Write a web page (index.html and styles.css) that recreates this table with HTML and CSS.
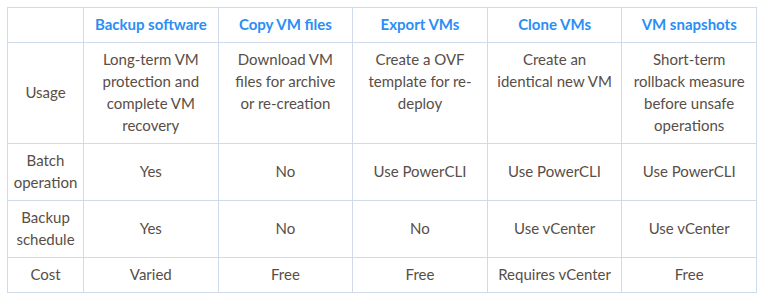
FILE: index.html
```html
<!DOCTYPE html>
<html lang="en">
<head>
    <meta charset="UTF-8">
    <title>VM backup methods</title>
    <link rel="stylesheet" href="styles.css">
</head>
<body>
    <table class="compare">
        <colgroup>
            <col class="col-label">
            <col><col><col><col><col>
        </colgroup>
        <thead>
            <tr>
                <th></th>
                <th>Backup software</th>
                <th>Copy VM files</th>
                <th>Export VMs</th>
                <th>Clone VMs</th>
                <th>VM snapshots</th>
            </tr>
        </thead>
        <tbody>
            <tr class="row-usage">
                <td>Usage</td>
                <td>Long-term VM protection and complete VM recovery</td>
                <td>Download VM files for archive or re-creation</td>
                <td>Create a OVF template for re-deploy</td>
                <td>Create an identical new VM</td>
                <td>Short-term rollback measure before unsafe operations</td>
            </tr>
            <tr>
                <td>Batch operation</td>
                <td>Yes</td>
                <td>No</td>
                <td>Use PowerCLI</td>
                <td>Use PowerCLI</td>
                <td>Use PowerCLI</td>
            </tr>
            <tr>
                <td>Backup schedule</td>
                <td>Yes</td>
                <td>No</td>
                <td>No</td>
                <td>Use vCenter</td>
                <td>Use vCenter</td>
            </tr>
            <tr>
                <td>Cost</td>
                <td>Varied</td>
                <td>Free</td>
                <td>Free</td>
                <td>Requires vCenter</td>
                <td>Free</td>
            </tr>
        </tbody>
    </table>
</body>
</html>
```

FILE: styles.css
```css
body {
    margin: 0;
    padding: 7px 9px 0 7px;
    background: #ffffff;
    font-family: 'Lato', 'Liberation Sans', sans-serif;
    font-size: 15px;
    color: #584e47;
}
.compare {
    width: 750px;
    border-collapse: collapse;
    table-layout: fixed;
}
.col-label {
    width: 76px;
}
.compare th,
.compare td {
    border: 1px solid #cfdbe8;
    text-align: center;
    vertical-align: middle;
    line-height: 22px;
    padding: 5px 9px 7px;
}
.compare td:first-child {
    padding: 5px 2px 7px;
}
.compare th {
    color: #2a8ef5;
    font-weight: bold;
}
.row-usage td {
    vertical-align: top;
}
.row-usage td:first-child {
    vertical-align: middle;
}
```
